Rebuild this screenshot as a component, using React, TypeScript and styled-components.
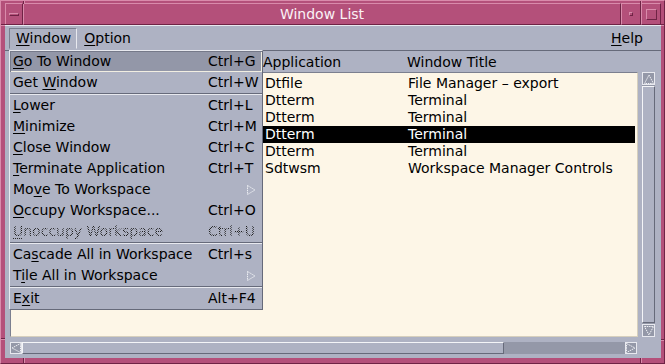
import React from 'react';
import styled, { createGlobalStyle, css } from 'styled-components';

const C = {
  pink: '#b4507a',
  pinkLight: '#d98bab',
  pinkDark: '#6f2345',
  grey: '#aeb2c3',
  greyLight: '#e8e9ef',
  greyDark: '#666a7a',
  armed: '#9397a8',
  trough: '#9498a8',
  cream: '#fdf6e7',
  creamEdge: '#d6cfbd',
};

const Global = createGlobalStyle`
  html, body { margin: 0; padding: 0; background: #fff; overflow: hidden; }
  body { font-family: "DejaVu Sans", "Liberation Sans", sans-serif; font-size: 14px; color: #000; }
  #root { width: 665px; height: 364px; }
`;

const raised = (light: string, dark: string) => css`
  border-style: solid;
  border-width: 1px;
  border-color: ${light} ${dark} ${dark} ${light};
`;

const Frame = styled.div`
  position: relative;
  box-sizing: border-box;
  width: 665px;
  height: 364px;
  background: ${C.pink};
  ${raised(C.pinkLight, C.pinkDark)};
  padding: 2px 3px 5px 4px;
  display: flex;
  flex-direction: column;
`;

const Tick = styled.span<{ $dir: 'v' | 'h' }>`
  position: absolute;
  box-sizing: border-box;
  ${(p) =>
    p.$dir === 'v'
      ? css`width: 2px; border-left: 1px solid ${C.pinkDark}; border-right: 1px solid ${C.pinkLight};`
      : css`height: 2px; border-top: 1px solid ${C.pinkDark}; border-bottom: 1px solid ${C.pinkLight};`}
`;

const TitleBar = styled.div`
  display: flex;
  height: 22px;
  flex: none;
`;

const TitleButton = styled.div<{ $w: number }>`
  box-sizing: border-box;
  width: ${(p) => p.$w}px;
  ${raised(C.pinkLight, C.pinkDark)};
  display: flex;
  align-items: center;
  justify-content: center;
`;

const TitleText = styled.div`
  flex: 1;
  box-sizing: border-box;
  ${raised(C.pinkLight, C.pinkDark)};
  color: #fbf2f6;
  display: flex;
  align-items: center;
  justify-content: center;
  line-height: 20px;
`;

const Glyph = styled.span<{ $w: number; $h: number }>`
  box-sizing: border-box;
  width: ${(p) => p.$w}px;
  height: ${(p) => p.$h}px;
  ${raised(C.pinkLight, C.pinkDark)};
`;

const Client = styled.div`
  flex: 1;
  background: ${C.grey};
  display: flex;
  flex-direction: column;
  position: relative;
`;

const MenuBar = styled.div`
  position: relative;
  box-sizing: border-box;
  height: 26px;
  flex: none;
  border-top: 1px solid ${C.greyLight};
  border-bottom: 1px solid ${C.greyDark};
  padding: 2px 12px 1px 4px;
  display: flex;
  align-items: flex-start;
`;

const MenuTitle = styled.div<{ $open?: boolean; $right?: boolean }>`
  box-sizing: border-box;
  height: 21px;
  line-height: 19px;
  padding: 0 5px 0 6px;
  border: 1px solid transparent;
  ${(p) => p.$open && css`border-color: #7a7e8e ${C.greyLight} ${C.grey} #7a7e8e;`}
  ${(p) => p.$right && css`margin-left: auto;`}
  white-space: nowrap;
`;

const U = styled.span<{ $dotted?: boolean }>`
  text-decoration: underline;
  text-underline-offset: 2px;
  text-decoration-thickness: 1px;
  ${(p) => p.$dotted && css`text-decoration-style: dotted; text-decoration-color: #2a2a2a;`}
`;

const Menu = styled.div`
  position: absolute;
  left: 4px;
  top: 24px;
  width: 254px;
  box-sizing: border-box;
  background: ${C.grey};
  ${raised(C.greyLight, C.greyDark)};
  display: flex;
  flex-direction: column;
  z-index: 5;
`;

const Item = styled.div<{ $armed?: boolean; $disabled?: boolean }>`
  box-sizing: border-box;
  height: 21px;
  line-height: 21px;
  display: grid;
  grid-template-columns: 195px 1fr;
  align-items: center;
  padding-left: 3px;
  white-space: nowrap;
  ${(p) =>
    p.$armed &&
    css`
      background: ${C.armed};
      box-shadow: inset 1px 1px 0 #757989, inset -1px -1px 0 #f1eee2;
    `}
  ${(p) =>
    p.$disabled &&
    css`
      & > span {
        color: transparent;
        background: repeating-conic-gradient(#1e1e1e 0 25%, transparent 0 50%) 0 0 / 2px 2px;
        -webkit-background-clip: text;
        background-clip: text;
      }
    `}
`;

const Sep = styled.div`
  height: 0;
  border-top: 1px solid ${C.greyDark};
  border-bottom: 1px solid ${C.greyLight};
`;

const CascadeMark = styled.svg`
  justify-self: end;
  margin-right: 6px;
`;

const WorkArea = styled.div`
  flex: 1;
  display: flex;
  flex-direction: column;
  padding: 0 6px 0 5px;
`;

const Header = styled.div`
  height: 21px;
  box-sizing: border-box;
  padding-top: 3px;
  line-height: 17px;
  display: grid;
  grid-template-columns: 253px 144px 1fr;
  white-space: nowrap;
`;

const Body = styled.div`
  display: flex;
  gap: 4px;
  height: 265px;
`;

const ListBox = styled.div`
  box-sizing: border-box;
  width: 628px;
  height: 100%;
  background: ${C.cream};
  border-style: solid;
  border-width: 1px;
  border-color: #7b7f8f ${C.creamEdge} ${C.creamEdge} #7b7f8f;
  padding: 2px;
  overflow: hidden;
`;

const Row = styled.div<{ $selected?: boolean }>`
  height: 17px;
  line-height: 17px;
  display: grid;
  grid-template-columns: 252px 143px 1fr;
  white-space: nowrap;
  ${(p) => p.$selected && css`background: #000; color: #fff;`}
`;

const VScroll = styled.div`
  box-sizing: border-box;
  width: 13px;
  height: 100%;
  background: ${C.trough};
  display: flex;
  flex-direction: column;
`;

const HScroll = styled.div`
  box-sizing: border-box;
  margin-top: 5px;
  width: 627px;
  height: 12px;
  background: ${C.trough};
  display: flex;
`;

const ArrowBox = styled.div<{ $h?: boolean }>`
  flex: none;
  ${(p) => (p.$h ? css`width: 12px; height: 12px;` : css`width: 13px; height: 13px;`)}
  display: flex;
  align-items: center;
  justify-content: center;
  box-sizing: border-box;
  border: 1px solid ${C.greyLight};
  background: ${C.trough};
`;

const Thumb = styled.div<{ $h?: boolean }>`
  box-sizing: border-box;
  background: ${C.grey};
  ${raised('#f4f5f8', C.greyDark)};
  ${(p) => (p.$h ? css`width: 482px; height: 100%;` : css`flex: 1; margin: 1px 0;`)}
`;

type Dir = 'up' | 'down' | 'left' | 'right';

const Arrow: React.FC<{ dir: Dir }> = ({ dir }) => {
  const pts: Record<Dir, string> = {
    up: '5,1 9.5,9.5 0.5,9.5',
    down: '0.5,0.5 9.5,0.5 5,9',
    left: '1,5 9.5,0.5 9.5,9.5',
    right: '0.5,0.5 9,5 0.5,9.5',
  };
  return (
    <svg width="10" height="10" viewBox="0 0 10 10">
      <polygon points={pts[dir]} fill="none" stroke="#f2f3f7" strokeWidth="1" strokeDasharray="1.5 0.8" />
    </svg>
  );
};

const menuItems: Array<
  | { sep: true }
  | { label: React.ReactNode; key?: string; armed?: boolean; disabled?: boolean; cascade?: boolean; sep?: false }
> = [
  { label: <><U>G</U>o To Window</>, key: 'Ctrl+G', armed: true },
  { label: <>Get <U>W</U>indow</>, key: 'Ctrl+W' },
  { sep: true },
  { label: <><U>L</U>ower</>, key: 'Ctrl+L' },
  { label: <><U>M</U>inimize</>, key: 'Ctrl+M' },
  { label: <><U>C</U>lose Window</>, key: 'Ctrl+C' },
  { label: <><U>T</U>erminate Application</>, key: 'Ctrl+T' },
  { label: <>Mo<U>v</U>e To Workspace</>, cascade: true },
  { label: <><U>O</U>ccupy Workspace...</>, key: 'Ctrl+O' },
  { label: <><U $dotted>U</U>noccupy Workspace</>, key: 'Ctrl+U', disabled: true },
  { sep: true },
  { label: <>Ca<U>s</U>cade All in Workspace</>, key: 'Ctrl+s' },
  { label: <>T<U>i</U>le All in Workspace</>, cascade: true },
  { sep: true },
  { label: <>E<U>x</U>it</>, key: 'Alt+F4' },
];

const rows = [
  { app: 'Dtfile', title: 'File Manager \u2013 export' },
  { app: 'Dtterm', title: 'Terminal' },
  { app: 'Dtterm', title: 'Terminal' },
  { app: 'Dtterm', title: 'Terminal', selected: true },
  { app: 'Dtterm', title: 'Terminal' },
  { app: 'Sdtwsm', title: 'Workspace Manager Controls' },
];

export default function App() {
  return (
    <>
      <Global />
      <Frame>
        <Tick $dir="v" style={{ left: 22, top: 0, height: 3 }} />
        <Tick $dir="v" style={{ left: 639, top: 0, height: 3 }} />
        <Tick $dir="v" style={{ left: 22, bottom: 0, height: 6 }} />
        <Tick $dir="v" style={{ left: 639, bottom: 0, height: 6 }} />
        <Tick $dir="h" style={{ left: 0, top: 23, width: 5 }} />
        <Tick $dir="h" style={{ right: 0, top: 23, width: 4 }} />
        <Tick $dir="h" style={{ left: 0, top: 337, width: 5 }} />
        <Tick $dir="h" style={{ right: 0, top: 338, width: 4 }} />
        <TitleBar>
          <TitleButton $w={18}>
            <Glyph $w={10} $h={3} />
          </TitleButton>
          <TitleText>Window List</TitleText>
          <TitleButton $w={20}>
            <Glyph $w={4} $h={4} />
          </TitleButton>
          <TitleButton $w={20}>
            <Glyph $w={11} $h={11} />
          </TitleButton>
        </TitleBar>
        <Client>
          <MenuBar>
            <MenuTitle $open>
              <U>W</U>indow
            </MenuTitle>
            <MenuTitle>
              <U>O</U>ption
            </MenuTitle>
            <MenuTitle $right>
              <U>H</U>elp
            </MenuTitle>
            <Menu>
              {menuItems.map((m, i) =>
                m.sep ? (
                  <Sep key={i} />
                ) : (
                  <Item key={i} $armed={m.armed} $disabled={m.disabled}>
                    <span>{m.label}</span>
                    {m.cascade ? (
                      <CascadeMark width="9" height="10" viewBox="0 0 9 10">
                        <polygon points="0.5,0.5 8,5 0.5,9.5" fill="none" stroke="#eef0f4" strokeWidth="1" strokeDasharray="1.5 0.8" />
                      </CascadeMark>
                    ) : (
                      <span>{m.key}</span>
                    )}
                  </Item>
                )
              )}
            </Menu>
          </MenuBar>
          <WorkArea>
            <Header>
              <span />
              <span>Application</span>
              <span>Window Title</span>
            </Header>
            <Body>
              <ListBox>
                {rows.map((r, i) => (
                  <Row key={i} $selected={r.selected}>
                    <span />
                    <span>{r.app}</span>
                    <span>{r.title}</span>
                  </Row>
                ))}
              </ListBox>
              <VScroll>
                <ArrowBox>
                  <Arrow dir="up" />
                </ArrowBox>
                <Thumb />
                <ArrowBox>
                  <Arrow dir="down" />
                </ArrowBox>
              </VScroll>
            </Body>
            <HScroll>
              <ArrowBox $h>
                <Arrow dir="left" />
              </ArrowBox>
              <Thumb $h />
              <div style={{ flex: 1 }} />
              <ArrowBox $h>
                <Arrow dir="right" />
              </ArrowBox>
            </HScroll>
          </WorkArea>
        </Client>
      </Frame>
    </>
  );
}
